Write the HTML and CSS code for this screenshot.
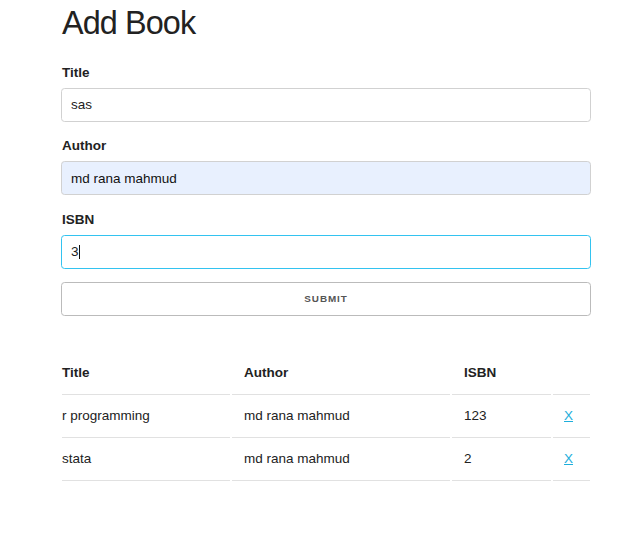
FILE: index.html
```html
<!DOCTYPE html>
<html lang="en">
<head>
<meta charset="utf-8">
<title>Add Book</title>
<link rel="stylesheet" href="styles.css">
</head>
<body>
<div class="container">
  <h3 class="page-title">Add Book</h3>
  <form class="book-form" onsubmit="return false">
    <label class="field-label" for="title">Title</label>
    <input class="field" id="title" type="text" value="sas">
    <label class="field-label" for="author">Author</label>
    <input class="field field-autofill" id="author" type="text" value="md rana mahmud">
    <label class="field-label" for="isbn">ISBN</label>
    <div class="field-wrap">
      <input class="field field-focus" id="isbn" type="text" value="3">
      <span class="caret"></span>
    </div>
    <button class="submit-btn" type="submit">Submit</button>
  </form>
  <table class="book-table">
    <colgroup>
      <col class="col-title">
      <col class="col-author">
      <col class="col-isbn">
      <col class="col-del">
    </colgroup>
    <thead>
      <tr><th>Title</th><th>Author</th><th>ISBN</th><th></th></tr>
    </thead>
    <tbody>
      <tr><td>r programming</td><td>md rana mahmud</td><td>123</td><td><a href="#" class="delete">X</a></td></tr>
      <tr><td>stata</td><td>md rana mahmud</td><td>2</td><td><a href="#" class="delete">X</a></td></tr>
    </tbody>
  </table>
</div>
</body>
</html>
```
FILE: styles.css
```css
* { box-sizing: border-box; }
html, body { margin: 0; padding: 0; background: #fff; }
body {
  font-family: "Liberation Sans", Arial, sans-serif;
  font-size: 13.5px;
  line-height: 1.6;
  color: #222;
}
.container {
  width: 530px;
  margin-left: 61px;
  padding-top: 2px;
}
.page-title {
  margin: 0 0 18px 1px;
  font-size: 32.4px;
  line-height: 42px;
  font-weight: 400;
  letter-spacing: -0.9px;
  color: #222;
}
.book-form {
  display: flex;
  flex-direction: column;
  margin-bottom: 26.5px;
}
.field-label {
  display: block;
  font-weight: 700;
  line-height: 21.6px;
  margin: 0 0 4.2px 1px;
}
.field {
  display: block;
  width: 100%;
  height: 34.2px;
  padding: 5px 9px;
  border: 1px solid #d1d1d1;
  border-radius: 3.6px;
  font-family: "Liberation Sans", Arial, sans-serif;
  font-size: 13.5px;
  color: #222;
  background: #fff;
  margin: 0 0 13.4px 0;
  outline: none;
}
.field-autofill { background: #e8f0fe; color: #111; }
.field-focus { border-color: #33c3f0; }
.field-wrap { position: relative; }
.caret {
  position: absolute;
  left: 18px;
  top: 10px;
  width: 1px;
  height: 14px;
  background: #111;
}
.submit-btn {
  display: block;
  width: 100%;
  height: 34.2px;
  padding: 0 27px;
  border: 1px solid #bbb;
  border-radius: 3.6px;
  background: transparent;
  color: #555;
  font-family: "Liberation Sans", Arial, sans-serif;
  font-size: 9.9px;
  font-weight: 700;
  letter-spacing: 0.9px;
  text-transform: uppercase;
  line-height: 32px;
  text-align: center;
  margin-bottom: 9px;
  cursor: pointer;
}
.book-table {
  width: 532px;
  margin-left: -1px;
  table-layout: fixed;
  border-collapse: separate;
  border-spacing: 2px 0;
}
.col-title { width: 168px; }
.col-author { width: 218px; }
.col-isbn { width: 99px; }
.col-del { width: 37px; }
.book-table th,
.book-table td {
  padding: 10.2px 12px;
  line-height: 21.6px;
  text-align: left;
  border-bottom: 1px solid #e1e1e1;
  font-size: 13.5px;
}
.book-table th { font-weight: 700; }
.book-table th:first-child,
.book-table td:first-child { padding-left: 0; }
.book-table th:last-child,
.book-table td:last-child { padding-right: 0; padding-left: 11px; }
.delete { color: #1eaedb; text-decoration: underline; }
```
